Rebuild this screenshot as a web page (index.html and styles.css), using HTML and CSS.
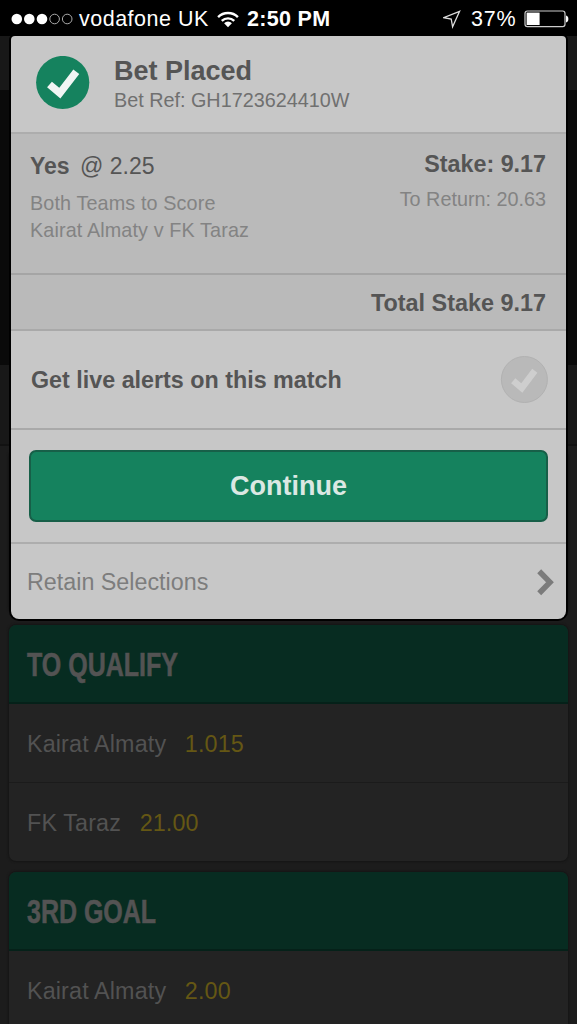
FILE: index.html
```
<!DOCTYPE html>
<html lang="en">
<head>
    <meta charset="UTF-8">
    <meta name="viewport" content="width=device-width, initial-scale=1.0">
    <title>Bet Placed</title>
    <link rel="stylesheet" href="styles.css">
</head>
<body>
    <div class="statusBar">
      <svg class="signal" width="62" height="12" viewBox="0 0 62 12">
        <circle cx="5.8" cy="6" r="5.3"/>
        <circle cx="18.3" cy="6" r="5.3"/>
        <circle cx="31" cy="6" r="5.3"/>
        <circle class="empty" cx="43.6" cy="6" r="4.8"/>
        <circle class="empty" cx="56.2" cy="6" r="4.8"/>
      </svg>
      <span class="carrier">vodafone UK</span>
      <svg class="wifi" width="22" height="17" viewBox="0 0 22 17">
        <path class="arc" d="M1.1 6.1a14 14 0 0 1 19.8 0"/>
        <path class="arc" d="M4.8 9.9a8.8 8.8 0 0 1 12.4 0"/>
        <path d="M7.1 12.2a5.5 5.5 0 0 1 7.8 0L11 16.2z"/>
      </svg>
      <span class="time">2:50 PM</span>
      <svg class="location" width="19" height="19" viewBox="0 0 19 19">
        <path d="M16.600 1.300L0.600 7.600L8.200 9L9.600 16.800z"/>
      </svg>
      <span class="percent">37%</span>
      <svg class="battery" width="45" height="18" viewBox="0 0 45 18">
        <rect class="case" x="1" y="1" width="40" height="15.6" rx="2.4"/>
        <rect x="2.6" y="2.6" width="13" height="12.4"/>
        <path d="M42 5.500c3.200.5 3.200 6.500 0 7z"/>
      </svg>
    </div>

    <div class="page">
      <div class="pageHeader"></div>
      <div class="pitch"></div>
      <div class="tabs"></div>
      <div class="markets">
        <div class="market previous"></div>
        <div class="market">
          <h2><span>TO QUALIFY</span></h2>
          <div class="row">Kairat Almaty <span class="odds">1.015</span></div>
          <div class="row">FK Taraz <span class="odds">21.00</span></div>
        </div>
        <div class="market">
          <h2><span>3RD GOAL</span></h2>
          <div class="row">Kairat Almaty <span class="odds">2.00</span></div>
          <div class="row"></div>
        </div>
      </div>
    </div>

    <div class="receipt">
      <div class="receiptHeader">
        <svg width="54" height="54" viewBox="0 0 54 54">
          <circle class="greenDot" cx="26.700" cy="26.500" r="26.6"/>
          <path class="tick" d="M13.500 28.500L23.800 37.200L40.300 15.800"/>
        </svg>
        <div>
          <h1>Bet Placed</h1>
          <div class="betRef">Bet Ref: GH1723624410W</div>
        </div>
      </div>
      <div class="selection">
        <div>
          <div class="pick"><b>Yes</b> @ 2.25</div>
          <div class="detail">Both Teams to Score<br>Kairat Almaty v FK Taraz</div>
        </div>
        <div class="amounts">
          <div class="stake">Stake: 9.17</div>
          <div class="toReturn">To Return: 20.63</div>
        </div>
      </div>
      <div class="total">Total Stake 9.17</div>
      <div class="alerts">
        <span>Get live alerts on this match</span>
        <svg width="48" height="48" viewBox="0 0 48 48">
          <circle class="greyDot" cx="24.400" cy="23.500" r="23"/>
          <path class="tick off" d="M13.200 24.800L21.800 32L34.800 14.800"/>
        </svg>
      </div>
      <div class="action">
        <button type="button">Continue</button>
      </div>
      <div class="retain">
        <span>Retain Selections</span>
        <svg width="17" height="27" viewBox="0 0 17 27">
          <path class="chevron" d="M2.200 2.200L13 13.200L2.200 24.200"/>
        </svg>
      </div>
    </div>
</body>
</html>
```
FILE: styles.css
```
* {
    box-sizing: border-box;
}
body {
    margin: 0;
    height: 1024px;
    overflow: hidden;
    position: relative;
    background-color: #000;
    font-family: "Liberation Sans", Arial, sans-serif;
}
h1, h2 {
    margin: 0;
}
svg {
    display: block;
    flex: none;
}

/* status bar */
.statusBar {
    display: flex;
    align-items: center;
    height: 36px;
    padding: 2px 8px 0 11px;
    color: #fff;
    font-size: 21.5px;
    white-space: nowrap;
}
.statusBar svg {
    fill: #fff;
}
.signal .empty {
    fill: none;
    stroke: #aaa;
    stroke-width: 1;
}
.carrier {
    width: 132px;
    margin-left: 6px;
    letter-spacing: 0.5px;
}
.wifi {
    margin-left: 6px;
}
.wifi .arc {
    fill: none;
    stroke: #fff;
    stroke-width: 2.4;
}
.time {
    margin-left: 8px;
    font-weight: bold;
    letter-spacing: 0.3px;
}
.location {
    margin-left: auto;
}
.statusBar .location {
    fill: none;
    stroke: #ddd;
    stroke-width: 1.3;
}
.percent {
    width: 46px;
    margin-left: 9px;
    letter-spacing: 0.8px;
}
.battery {
    margin-left: 7px;
}
.battery .case {
    fill: none;
    stroke: #ccc;
    stroke-width: 1.2;
}

/* dimmed page */
.page {
    height: 988px;
    overflow: hidden;
    background-color: #1c1c1c;
}
.pageHeader {
    height: 54px;
    background-color: #181818;
}
.pitch {
    height: 275px;
    background-color: #0a0a0a;
}
.tabs {
    height: 81px;
    background-color: #181818;
    border-bottom: 2px solid #121212;
}
.markets {
    display: flex;
    flex-direction: column;
    gap: 11px;
    padding: 4px 9px 0;
}
.market {
    flex: none;
    overflow: hidden;
    border-radius: 7px;
    background-color: #232323;
    box-shadow: 0 0 2px 1px #151515;
}
.previous {
    height: 164px;
}
.market h2 {
    height: 79px;
    padding-left: 18px;
    border-bottom: 2px solid #052119;
    background-color: #072c21;
    color: #535353;
    font-size: 34px;
    line-height: 78px;
}
.market h2 span {
    display: inline-block;
    transform: scaleX(0.735);
    transform-origin: left;
    -webkit-text-stroke: 0.6px #535353;
}
.row {
    height: 78px;
    padding-left: 18px;
    color: #525252;
    font-size: 23.3px;
    letter-spacing: 0.15px;
    line-height: 80px;
}
.row + .row {
    height: 79px;
    border-top: 1px solid #1b1b1b;
}
.odds {
    margin-left: 12px;
    color: #655714;
}

/* bet receipt */
.receipt {
    position: absolute;
    top: 36px;
    left: 11px;
    width: 555px;
    height: 583px;
    overflow: hidden;
    border-radius: 4px 4px 8px 8px;
    background-color: #c7c7c7;
    box-shadow: 0 0 0 2px #000;
    color: #555;
}
.receiptHeader {
    display: flex;
    gap: 24px;
    height: 98px;
    padding: 20px 25px 0;
    border-bottom: 2px solid #adadad;
}
h1 {
    font-size: 27px;
    line-height: 30px;
}
.betRef {
    color: #707070;
    font-size: 19.8px;
    line-height: 28px;
}
.greenDot {
    fill: #15825e;
}
.tick {
    fill: none;
    stroke: #f0f5f3;
    stroke-width: 7.5;
}
.selection {
    display: flex;
    justify-content: space-between;
    height: 141px;
    padding: 18px 20px 0 19px;
    border-bottom: 2px solid #a5a5a5;
    background-color: #bababa;
}
.pick {
    font-size: 23px;
    line-height: 28px;
}
.pick b {
    margin-right: 4px;
}
.detail {
    margin-top: 10px;
    color: #838383;
    font-size: 19.8px;
    letter-spacing: 0.12px;
    line-height: 27px;
}
.amounts {
    text-align: right;
}
.stake {
    font-size: 23.3px;
    font-weight: bold;
    line-height: 25px;
}
.toReturn {
    margin-top: 8px;
    color: #838383;
    font-size: 19.8px;
    line-height: 28px;
}
.total {
    height: 56px;
    padding-right: 20px;
    border-bottom: 2px solid #a9a9a9;
    background-color: #bababa;
    font-size: 23.4px;
    font-weight: bold;
    line-height: 56px;
    text-align: right;
}
.alerts {
    display: flex;
    align-items: center;
    justify-content: space-between;
    height: 99px;
    padding: 1px 18px 0 20px;
    border-bottom: 2px solid #a9a9a9;
    font-size: 23.3px;
    font-weight: bold;
}
.greyDot {
    fill: #b9b9b9;
    stroke: #b1b1b1;
}
.tick.off {
    stroke: #cecece;
    stroke-width: 6.5;
}
.action {
    height: 114px;
    padding: 20px 18px 0;
    border-bottom: 2px solid #adadad;
}
button {
    display: block;
    width: 100%;
    height: 72px;
    border: 2px solid #175f48;
    border-radius: 7px;
    background-color: #15825e;
    color: #dbe8e3;
    font: bold 27px "Liberation Sans", Arial, sans-serif;
}
.retain {
    display: flex;
    align-items: center;
    justify-content: space-between;
    height: 76px;
    padding: 0 12px 0 16px;
    color: #7d7d7d;
    font-size: 23.3px;
}
.chevron {
    fill: none;
    stroke: #7b7b7b;
    stroke-width: 5.5;
}
```
